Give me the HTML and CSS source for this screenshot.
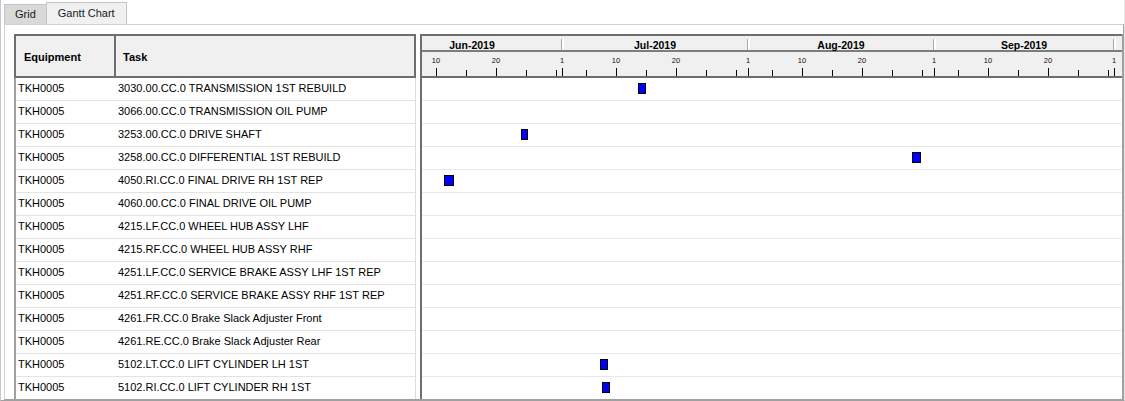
FILE: index.html
```html
<!DOCTYPE html>
<html lang="en">
<head>
    <meta charset="UTF-8">
    <title>Gantt Chart</title>
    <link rel="stylesheet" href="styles.css">
</head>
<body>
    <div class="window">
        <div class="tabs">
            <div class="tab">Grid</div>
            <div class="tab active">Gantt Chart</div>
        </div>

        <div class="panel">
            <div class="grid">
                <div class="grid-head">
                    <div class="col-equip">Equipment</div>
                    <div class="col-task">Task</div>
                </div>
                <div class="grid-rows" id="grid-rows"></div>
            </div>

            <div class="splitter"></div>

            <div class="gantt">
                <div class="gantt-head">
                    <div class="months" id="months"></div>
                    <div class="days" id="days"></div>
                </div>
                <div id="gantt-rows"></div>
            </div>
        </div>
    </div>

    <script>
        const DAY_PX = 6;
        const ORIGIN = -40; // 1 Jun sits 40px left of the visible chart
        const VIEW_PX = 700;

        const months = [
            ['Jun-2019', 30],
            ['Jul-2019', 31],
            ['Aug-2019', 31],
            ['Sep-2019', 30],
            ['Oct-2019', 31]
        ];

        // equipment, task, start (days from 1 Jun), duration (days)
        const tasks = [
            ['TKH0005', '3030.00.CC.0 TRANSMISSION 1ST REBUILD', 42.67, 1.33],
            ['TKH0005', '3066.00.CC.0 TRANSMISSION OIL PUMP'],
            ['TKH0005', '3253.00.CC.0 DRIVE SHAFT', 23.17, 1.17],
            ['TKH0005', '3258.00.CC.0 DIFFERENTIAL 1ST REBUILD', 88.33, 1.5],
            ['TKH0005', '4050.RI.CC.0 FINAL DRIVE RH 1ST REP', 10.33, 1.67],
            ['TKH0005', '4060.00.CC.0 FINAL DRIVE OIL PUMP'],
            ['TKH0005', '4215.LF.CC.0 WHEEL HUB ASSY LHF'],
            ['TKH0005', '4215.RF.CC.0 WHEEL HUB ASSY RHF'],
            ['TKH0005', '4251.LF.CC.0 SERVICE BRAKE ASSY LHF 1ST REP'],
            ['TKH0005', '4251.RF.CC.0 SERVICE BRAKE ASSY RHF 1ST REP'],
            ['TKH0005', '4261.FR.CC.0 Brake Slack Adjuster Front'],
            ['TKH0005', '4261.RE.CC.0 Brake Slack Adjuster Rear'],
            ['TKH0005', '5102.LT.CC.0 LIFT CYLINDER LH 1ST', 36.33, 1.33],
            ['TKH0005', '5102.RI.CC.0 LIFT CYLINDER RH 1ST', 36.67, 1.33]
        ];

        const monthsEl = document.getElementById('months');
        const daysEl = document.getElementById('days');
        const gridRows = document.getElementById('grid-rows');
        const ganttRows = document.getElementById('gantt-rows');

        let dayCount = 0;
        months.forEach(([name, len]) => {
            const start = ORIGIN + dayCount * DAY_PX;
            const m = document.createElement('div');
            m.className = 'month';
            m.style.width = (len * DAY_PX) + 'px';
            // label only when its centre is on screen
            if (start + len * DAY_PX / 2 < VIEW_PX) m.textContent = name;
            monthsEl.appendChild(m);

            [1, 5, 10, 15, 20, 25, 30].forEach(d => {
                if (d > len) return;
                const x = ORIGIN + (dayCount + d - 1) * DAY_PX;
                if (x < 0 || x > VIEW_PX) return;
                const labelled = d === 1 || d === 10 || d === 20;
                const tick = document.createElement('span');
                tick.className = labelled ? 'tick major' : 'tick';
                tick.style.left = x + 'px';
                daysEl.appendChild(tick);
                if (labelled) {
                    const label = document.createElement('span');
                    label.className = 'day-label';
                    label.style.left = x + 'px';
                    label.textContent = d;
                    daysEl.appendChild(label);
                }
            });
            dayCount += len;
        });

        tasks.forEach(([equip, task, start, dur]) => {
            const row = document.createElement('div');
            row.className = 'grid-row';
            row.innerHTML = `<div class="cell-equip">${equip}</div><div class="cell-task">${task}</div>`;
            gridRows.appendChild(row);

            const gRow = document.createElement('div');
            gRow.className = 'gantt-row';
            if (start !== undefined) {
                const bar = document.createElement('div');
                bar.className = 'bar';
                bar.style.left = Math.round(ORIGIN + start * DAY_PX) + 'px';
                bar.style.width = Math.round(dur * DAY_PX) + 'px';
                gRow.appendChild(bar);
            }
            ganttRows.appendChild(gRow);
        });
    </script>
</body>
</html>
```

FILE: styles.css
```css
* {
    margin: 0;
    padding: 0;
    box-sizing: border-box;
}
body {
    font-family: "Liberation Sans", Arial, sans-serif;
    font-size: 11px;
    color: #000;
    background: #fff;
}
.window {
    width: 1125px;
    height: 401px;
    border-left: 1px solid #c8c8c8;
    border-right: 1px solid #e4e4e4;
    border-bottom: 1px solid #a0a0a0;
    display: flex;
    flex-direction: column;
    overflow: hidden;
}
.tabs {
    height: 24px;
    flex: none;
    display: flex;
    align-items: flex-end;
    padding-left: 3px;
}
.tab {
    height: 20px;
    line-height: 18px;
    padding: 0 10px;
    border: 1px solid #c4c4c4;
    border-bottom: none;
    background: #d9d9d9;
    color: #1a1a1a;
}
.tab.active {
    height: 22px;
    line-height: 21px;
    padding: 0 11px;
    margin-left: -1px;
    background: #f0f0f0;
}
.panel {
    flex: 1;
    min-height: 0;
    margin-left: 3px;
    border: 1px solid #d0d0d0;
    border-right-color: #a0a0a0;
    border-bottom-color: #a0a0a0;
    padding: 9px 0 0 9px;
    display: flex;
    align-items: flex-start;
    overflow: hidden;
}
.grid {
    width: 402px;
    flex: none;
}
.grid-head {
    display: flex;
    height: 44px;
    border-top: 2px solid #6e6e6e;
    font-weight: bold;
}
.grid-head div {
    background: #f0f0f0;
    border-right: 2px solid #6e6e6e;
    border-bottom: 2px solid #6e6e6e;
    padding-top: 1px;
    line-height: 40px;
}
.col-equip {
    width: 102px;
    border-left: 2px solid #6e6e6e;
    padding-left: 8px;
}
.col-task {
    width: 300px;
    padding-left: 7px;
}
.grid-rows {
    border-left: 2px solid #a0a0a0;
    border-right: 1px solid #dcdcdc;
}
.grid-row {
    display: flex;
    height: 23px;
    line-height: 21px;
    border-bottom: 1px solid #e3e3e3;
    white-space: nowrap;
}
.cell-equip {
    width: 100px;
    padding-left: 2px;
}
.cell-task {
    padding-left: 2px;
}
.splitter {
    width: 4px;
    flex: none;
}
.gantt {
    flex: 1;
    align-self: stretch;
    border-left: 2px solid #6e6e6e;
    border-right: 1px solid #a0a0a0;
    overflow: hidden;
}
.gantt-head {
    background: #f0f0f0;
    border-top: 2px solid #6e6e6e;
    border-bottom: 2px solid #6e6e6e;
}
.months {
    display: flex;
    height: 16px;
    margin-left: -40px;
    border-bottom: 2px solid #7c7c7c;
}
.month {
    flex: none;
    position: relative;
    text-align: center;
    font-size: 10.5px;
    font-weight: bold;
    line-height: 14px;
    padding-top: 2px;
}
.month + .month::before {
    content: "";
    position: absolute;
    left: -1px;
    top: 3px;
    bottom: 0;
    width: 2px;
    border-left: 1px solid #a8a8a8;
    background: #fff;
}
.days {
    position: relative;
    height: 24px;
    overflow: hidden;
}
.tick {
    position: absolute;
    bottom: 0;
    width: 1px;
    height: 6px;
    background: #000;
}
.tick.major {
    height: 8px;
}
.day-label {
    position: absolute;
    top: 5px;
    font-size: 7.5px;
    line-height: 8px;
    transform: translateX(-50%);
    color: #1a0a0a;
}
.gantt-row {
    position: relative;
    height: 23px;
    border-bottom: 1px solid #e8e8e8;
}
.bar {
    position: absolute;
    top: 5px;
    height: 11px;
    border: 1px solid #000;
    background: #0000ff;
}
```
